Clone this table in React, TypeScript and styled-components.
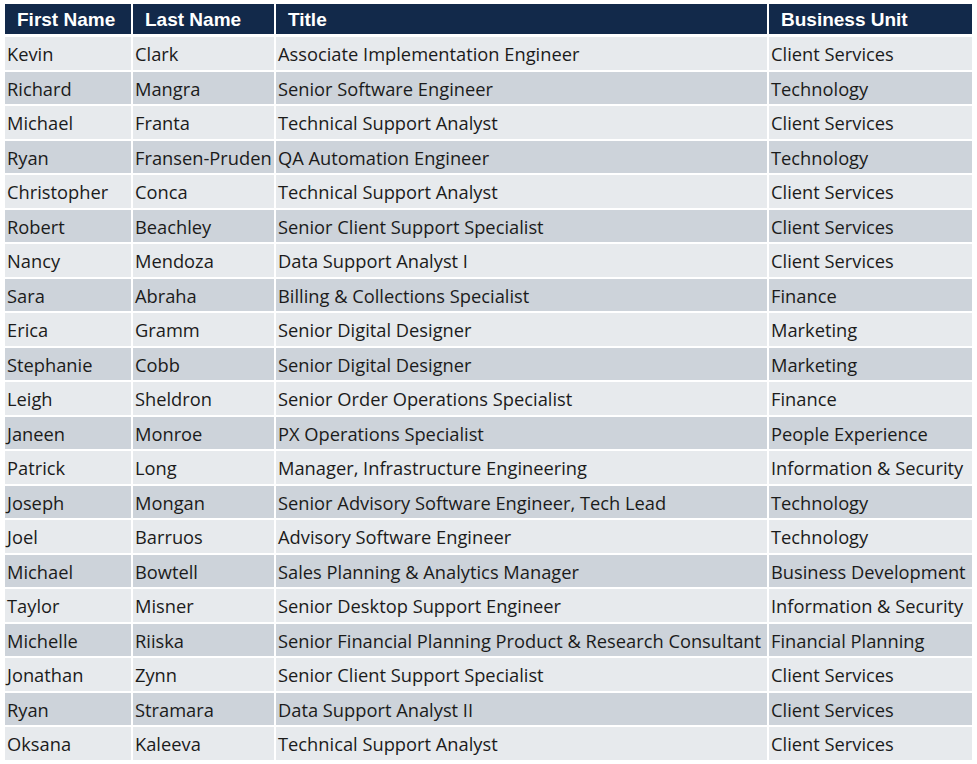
import React from 'react';
import styled, { createGlobalStyle } from 'styled-components';

const GlobalStyle = createGlobalStyle`
  html, body {
    margin: 0;
    padding: 0;
    background: #ffffff;
  }
`;

const rows: [string, string, string, string][] = [
  ['Kevin', 'Clark', 'Associate Implementation Engineer', 'Client Services'],
  ['Richard', 'Mangra', 'Senior Software Engineer', 'Technology'],
  ['Michael', 'Franta', 'Technical Support Analyst', 'Client Services'],
  ['Ryan', 'Fransen-Pruden', 'QA Automation Engineer', 'Technology'],
  ['Christopher', 'Conca', 'Technical Support Analyst', 'Client Services'],
  ['Robert', 'Beachley', 'Senior Client Support Specialist', 'Client Services'],
  ['Nancy', 'Mendoza', 'Data Support Analyst I', 'Client Services'],
  ['Sara', 'Abraha', 'Billing & Collections Specialist', 'Finance'],
  ['Erica', 'Gramm', 'Senior Digital Designer', 'Marketing'],
  ['Stephanie', 'Cobb', 'Senior Digital Designer', 'Marketing'],
  ['Leigh', 'Sheldron', 'Senior Order Operations Specialist', 'Finance'],
  ['Janeen', 'Monroe', 'PX Operations Specialist', 'People Experience'],
  ['Patrick', 'Long', 'Manager, Infrastructure Engineering', 'Information & Security'],
  ['Joseph', 'Mongan', 'Senior Advisory Software Engineer, Tech Lead', 'Technology'],
  ['Joel', 'Barruos', 'Advisory Software Engineer', 'Technology'],
  ['Michael', 'Bowtell', 'Sales Planning & Analytics Manager', 'Business Development'],
  ['Taylor', 'Misner', 'Senior Desktop Support Engineer', 'Information & Security'],
  ['Michelle', 'Riiska', 'Senior Financial Planning Product & Research Consultant', 'Financial Planning'],
  ['Jonathan', 'Zynn', 'Senior Client Support Specialist', 'Client Services'],
  ['Ryan', 'Stramara', 'Data Support Analyst II', 'Client Services'],
  ['Oksana', 'Kaleeva', 'Technical Support Analyst', 'Client Services'],
];

const headers = ['First Name', 'Last Name', 'Title', 'Business Unit'];

const Sheet = styled.div`
  display: grid;
  grid-template-columns: 126px 141px 491px 203px;
  grid-template-rows: 31px;
  grid-auto-rows: 32.5px;
  gap: 2px;
  padding: 4px 0 0 5px;
  width: max-content;
`;

const HeadCell = styled.div`
  display: flex;
  align-items: center;
  padding: 1px 0 0 12px;
  margin-bottom: 1px;
  background: #12294a;
  color: #ffffff;
  font-family: 'Liberation Sans', Arial, sans-serif;
  font-weight: 700;
  font-size: 19px;
  white-space: nowrap;
  overflow: hidden;
`;

const Cell = styled.div<{ $shade: boolean }>`
  display: flex;
  align-items: center;
  padding: 1px 0 0 2px;
  background: ${(p) => (p.$shade ? '#cdd3da' : '#e7eaed')};
  color: #1b1b1b;
  font-family: 'Open Sans', 'Noto Sans', sans-serif;
  font-size: 18.3px;
  white-space: nowrap;
  overflow: hidden;
`;

export default function App() {
  return (
    <>
      <GlobalStyle />
      <Sheet>
        {headers.map((h) => (
          <HeadCell key={h}>{h}</HeadCell>
        ))}
        {rows.map((r, i) =>
          r.map((v, j) => (
            <Cell key={`${i}-${j}`} $shade={i % 2 === 1}>
              {v}
            </Cell>
          ))
        )}
      </Sheet>
    </>
  );
}
